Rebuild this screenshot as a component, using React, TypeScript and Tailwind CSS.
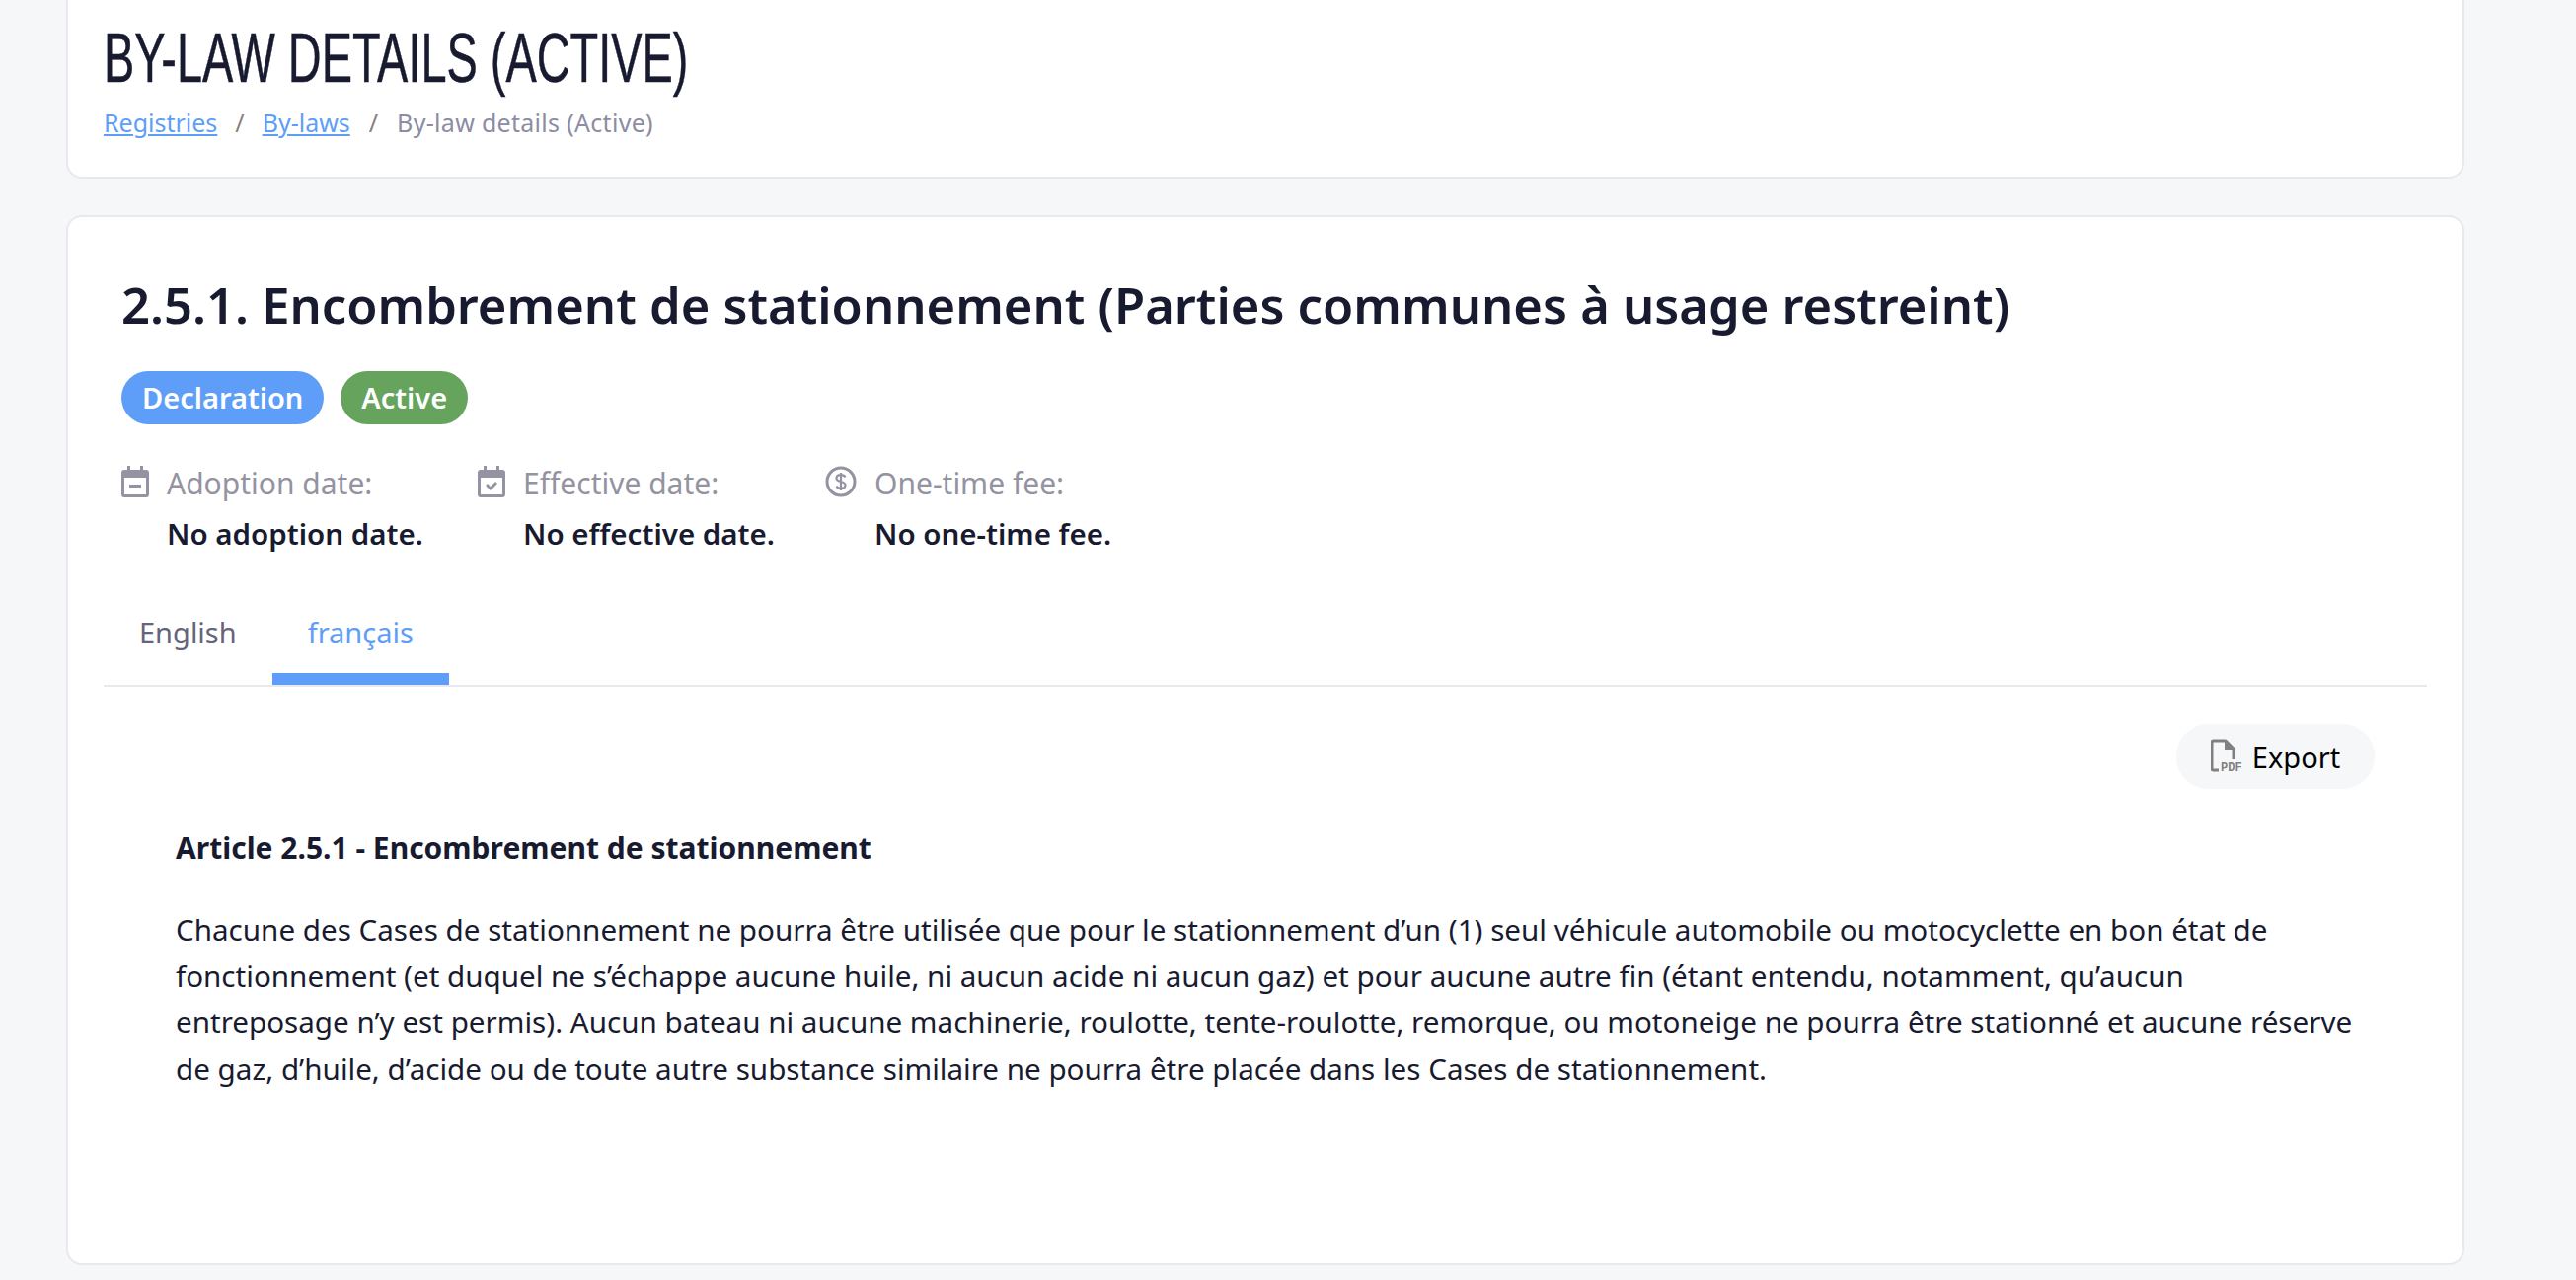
import React from 'react';

const CalendarMinus = () => (
  <svg viewBox="0 0 28 32" className="w-[28px] h-[32px] shrink-0 text-[#9393a1]" fill="currentColor">
    <path d="M6 0h3v4h10V0h3v4h3a3 3 0 0 1 3 3v22a3 3 0 0 1-3 3H3a3 3 0 0 1-3-3V7a3 3 0 0 1 3-3h3V0Zm-3 12v17h22V12H3Z" />
    <rect x="8" y="19" width="12" height="3" />
  </svg>
);

const CalendarCheck = () => (
  <svg viewBox="0 0 28 32" className="w-[28px] h-[32px] shrink-0 text-[#9393a1]" fill="currentColor">
    <path d="M6 0h3v4h10V0h3v4h3a3 3 0 0 1 3 3v22a3 3 0 0 1-3 3H3a3 3 0 0 1-3-3V7a3 3 0 0 1 3-3h3V0Zm-3 12v17h22V12H3Z" />
    <path d="M8 20l2-2 3 3 5-5 2 2-7 7-5-5Z" />
  </svg>
);

const DollarCircle = () => (
  <svg viewBox="0 0 32 32" className="w-[32px] h-[32px] shrink-0 text-[#9393a1]" fill="none" stroke="currentColor">
    <circle cx="16" cy="16" r="14" strokeWidth="3" />
    <path d="M20.5 11.5c-.6-1.4-2.4-2.300-4.500-2.300-2.600 0-4.500 1.300-4.500 3.300 0 4.500 9 2.500 9 7 0 2-1.900 3.300-4.500 3.300-2.100 0-3.900-.9-4.500-2.300M16 7v18" strokeWidth="2.200" />
  </svg>
);

const PdfIcon = () => (
  <svg viewBox="0 0 34 40" className="w-[34px] h-[40px] shrink-0 text-[#808080]">
    <path d="M8 33H3a2 2 0 0 1-2-2V6a2 2 0 0 1 2-2h12l8 8v10" fill="none" stroke="currentColor" strokeWidth="3" strokeLinejoin="round" />
    <path d="M14 4v9h9Z" fill="currentColor" />
    <text x="10" y="34" fontSize="12" fontWeight="700" fontFamily="'Liberation Mono', monospace" fill="currentColor">PDF</text>
  </svg>
);

const meta = [
  { label: 'Adoption date:', value: 'No adoption date.', icon: CalendarMinus, width: 'w-[361px]' },
  { label: 'Effective date:', value: 'No effective date.', icon: CalendarCheck, width: 'w-[352px]' },
  { label: 'One-time fee:', value: 'No one-time fee.', icon: DollarCircle, width: 'w-auto' },
];

export default function App() {
  return (
    <div className="h-[1297px] overflow-hidden bg-[#f6f7f9] pl-[67px] w-[2610px] font-['Noto_Sans',sans-serif]">
      <div className="w-[2430px]">
        {/* Page header */}
        <div className="-mt-[20px] h-[201px] bg-white border-2 border-[#e8e8ee] rounded-[16px] pl-[36px] pt-[41px]">
          <h1 className="origin-left scale-x-[0.67] whitespace-nowrap font-['Liberation_Sans',sans-serif] text-[70px] leading-[72px] text-[#181b30] uppercase [-webkit-text-stroke:0.5px_#181b30]">By-law details (Active)</h1>
          <div className="flex items-center mt-[11px] text-[25px] leading-[36px] text-[#8c8ca2]">
            <a className="text-[#5e9ef8] underline">Registries</a>
            <span className="mx-[18px] text-[#8c7f80]">/</span>
            <a className="text-[#5e9ef8] underline">By-laws</a>
            <span className="mx-[19px] text-[#8c7f80]">/</span>
            <span className="tracking-[0.3px]">By-law details (Active)</span>
          </div>
        </div>

        {/* By-law card */}
        <div className="mt-[37px] h-[1064px] bg-white border-2 border-[#e8e8ee] rounded-[16px] px-[36px]">
          <div className="px-[18px] pt-[50px]">
            <h2 className="text-[50.700px] leading-[78px] font-semibold text-[#181b30] whitespace-nowrap">2.5.1. Encombrement de stationnement (Parties communes à usage restreint)</h2>
            <div className="flex gap-[17px] mt-[28px]">
              <span className="h-[54px] px-[21px] flex items-center rounded-full bg-[#5e9ef8] text-white text-[29px] font-semibold">Declaration</span>
              <span className="h-[54px] px-[21px] flex items-center rounded-full bg-[#66a45e] text-white text-[29px] font-semibold">Active</span>
            </div>
            <div className="flex mt-[39px]">
              {meta.map((m) => (
                <div key={m.label} className={`flex gap-[18px] ${m.width}`}>
                  <div className="pt-[3px]"><m.icon /></div>
                  <div>
                    <div className="text-[30px] leading-[42px] text-[#9393a1]">{m.label}</div>
                    <div className="mt-[9px] text-[29.500px] leading-[42px] font-semibold text-[#181b30]">{m.value}</div>
                  </div>
                </div>
              ))}
            </div>
          </div>

          {/* Language tabs */}
          <div className="flex mt-[37px] border-b-2 border-[#e8e8ee]">
            <button className="h-[95px] px-[36px] text-[29px] text-[#66647a] border-b-[12px] border-transparent">English</button>
            <button className="h-[95px] px-[36px] text-[29px] text-[#5e9ef8] border-b-[12px] border-[#5e9ef8]">français</button>
          </div>

          <div className="flex justify-end mt-[38px] pr-[53px]">
            <button className="h-[65px] w-[201px] flex items-center justify-center gap-[8px] rounded-full bg-[#f6f7f9] text-[29px] text-black">
              <PdfIcon />
              Export
            </button>
          </div>

          <div className="pl-[73px] pr-[69px] mt-[36px] text-[29.600px] leading-[47px] text-[#181b30]">
            <p className="font-bold text-[30px]">Article 2.5.1 - Encombrement de stationnement</p>
            <p className="mt-[36px]">Chacune des Cases de stationnement ne pourra être utilisée que pour le stationnement d’un (1) seul véhicule automobile ou motocyclette en bon état de fonctionnement (et duquel ne s’échappe aucune huile, ni aucun acide ni aucun gaz) et pour aucune autre fin (étant entendu, notamment, qu’aucun entreposage n’y est permis). Aucun bateau ni aucune machinerie, roulotte, tente-roulotte, remorque, ou motoneige ne pourra être stationné et aucune réserve de gaz, d’huile, d’acide ou de toute autre substance similaire ne pourra être placée dans les Cases de stationnement.</p>
          </div>
        </div>
      </div>
    </div>
  );
}
